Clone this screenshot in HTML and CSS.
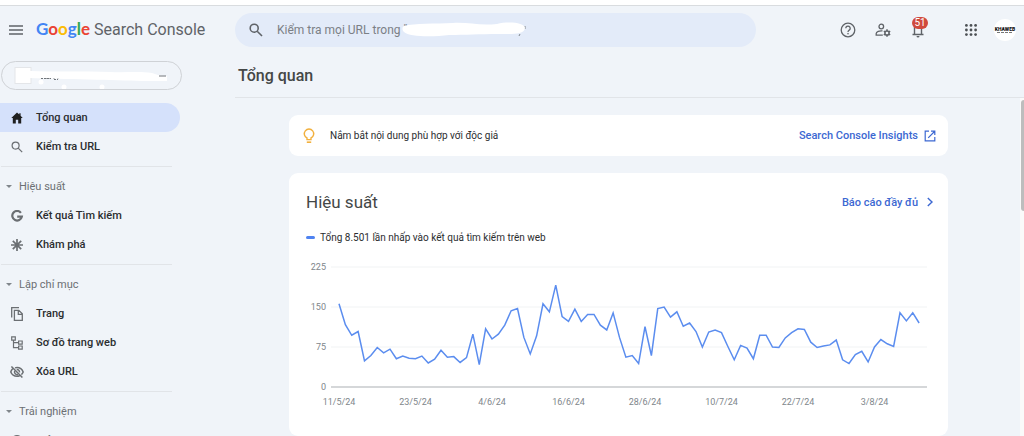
FILE: index.html
```html
<!DOCTYPE html>
<html lang="vi">
<head>
<meta charset="utf-8">
<title>Tổng quan - Google Search Console</title>
<link rel="stylesheet" href="styles.css">
</head>
<body>
<header class="topbar">
  <div class="brand">
    <button class="icon-button menu" aria-label="Menu">
      <svg width="14" height="10" viewBox="0 0 14 10" fill="none" stroke="#5f6368" stroke-width="1.3"><path d="M0 1h14M0 5h14M0 9h14"/></svg>
    </button>
    <a class="logo" href="#"><span class="google"><span class="b">G</span><span class="r">o</span><span class="y">o</span><span class="b">g</span><span class="g">l</span><span class="r">e</span></span><span class="product">Search Console</span></a>
  </div>
  <form class="search">
    <svg width="14" height="14" viewBox="0 0 14 14" fill="none" stroke="#5f6368" stroke-width="1.6"><circle cx="5.2" cy="5.2" r="4"/><path d="M8.2 8.2L13 13"/></svg>
    <div class="search-field">
      <input type="text" aria-label="Kiểm tra URL" placeholder="Kiểm tra mọi URL trong &quot;">
      <svg class="search-mask" width="128" height="16" viewBox="0 0 128 16"><path d="M124 4v3M119 12l-1 2" stroke="#80868b"/><path d="M3 4C14 1 34 2 52 1C67 0 78 4 96 2C108-1 124 1 124 6C123 13 111 12 98 12C78 12 64 13 48 13C32 15 8 15 3 10C1 8 1 5 3 4Z" fill="#fff"/></svg>
    </div>
  </form>
  <div class="actions">
    <button class="icon-button" aria-label="Trợ giúp">
      <svg width="16" height="16" viewBox="0 0 16 16" fill="none" stroke="#5f6368" stroke-width="1.3"><circle cx="8" cy="8" r="6.8"/><path d="M5.8 6.3a2.2 2.2 0 1 1 3.4 1.8C8.4 8.7 8 9 8 9.9"/><circle cx="8" cy="11.7" r=".5" fill="#5f6368" stroke-width=".6"/></svg>
    </button>
    <button class="icon-button" aria-label="Quản lý người dùng">
      <svg width="16" height="14" viewBox="0 0 16 14" fill="none" stroke="#5f6368" stroke-width="1.3"><circle cx="6.3" cy="3.5" r="2.3"/><path d="M7.5 7.9C4.5 7.5 1.2 8.7 1.2 10.5v1.6h6.6"/><circle cx="12" cy="10" r="2.1" stroke-width="1.5"/><path d="M12 6.3v1.6M12 12.1v1.6M8.8 8.150l1.4.8M13.8 11.050l1.4.8M8.8 11.850l1.4-.8M13.8 8.950l1.4-.8" stroke-width="1.5"/></svg>
    </button>
    <button class="icon-button bell" aria-label="Thông báo">
      <svg width="14" height="16" viewBox="0 0 14 16" fill="none" stroke="#5f6368" stroke-width="1.4"><path d="M1.500 12.500h11M3.500 12.500V6a3.500 3.500 0 0 1 7 0v6.500M7 2V.5"/><path d="M5.500 14h3a1.500 1.500 0 0 1-3 0z" fill="#5f6368" stroke="none"/></svg>
      <span class="badge">51</span>
    </button>
    <button class="icon-button apps" aria-label="Ứng dụng">
      <svg width="12" height="12" viewBox="0 0 12 12" fill="#4c5054"><circle cx="1.4" cy="1.4" r="1.4"/><circle cx="6" cy="1.4" r="1.4"/><circle cx="10.6" cy="1.4" r="1.4"/><circle cx="1.4" cy="6" r="1.4"/><circle cx="6" cy="6" r="1.4"/><circle cx="10.6" cy="6" r="1.4"/><circle cx="1.4" cy="10.6" r="1.4"/><circle cx="6" cy="10.6" r="1.4"/><circle cx="10.6" cy="10.6" r="1.4"/></svg>
    </button>
    <button class="avatar" aria-label="Tài khoản"><span>KHAWEB</span><svg width="16" height="1" viewBox="0 0 16 1"><path d="M0 .5h16" stroke="#777" stroke-dasharray="3 1"/></svg></button>
  </div>
</header>

<div class="layout">
  <aside class="sidebar">
    <button class="property" aria-label="Chọn trang web">
      <svg width="158" height="26" viewBox="0 0 158 26"><rect x="1" y="4.5" width="16" height="16" fill="#fff" stroke="#e4e6e9"/><path d="M27 15.5h18M120 16h4" stroke="#70757a" stroke-dasharray="2 2"/><path d="M16 8C40 9 70 8 96 9C112 10 124 8 138 10L144 12L153 13V18H128C100 17 50 16 16 15Z" fill="#fff"/><path d="M145 13h7" stroke="#70757a"/><path d="M27 15.500h10M40 16.500h4" stroke="#70757a" stroke-dasharray="2 1"/><circle cx="27" cy="19" r="2.5" fill="#fff"/><circle cx="50" cy="24" r="2.5" fill="#fff"/><circle cx="88" cy="24" r="2.5" fill="#fff"/></svg>
    </button>
    <nav>
      <div class="group">
        <a class="item active" href="#"><svg width="12" height="12" viewBox="0 0 12 12" fill="#1f1f1f"><path d="M6 .5L.3 5.9h1.500V11.500h3V7.8h2.400v3.7h3V5.9h1.500L9.600 3.7V1.300H8.300v1.200z"/></svg>Tổng quan</a>
        <a class="item" href="#"><svg width="12" height="12" viewBox="0 0 12 12" fill="none" stroke="#6b6f73" stroke-width="1.2"><circle cx="4.6" cy="4.6" r="3.5"/><path d="M7.2 7.2l4 4"/></svg>Kiểm tra URL</a>
      </div>
      <div class="group">
        <button class="heading">Hiệu suất</button>
        <a class="item" href="#"><svg width="12" height="12" viewBox="0 0 12 12" fill="none" stroke="#6b6f73" stroke-width="2.2"><path d="M9.9 2.8A4.8 4.8 0 1 0 10.8 6.7H6.2"/></svg>Kết quả Tìm kiếm</a>
        <a class="item" href="#"><svg width="12" height="12" viewBox="0 0 12 12" stroke="#6b6f73" stroke-width="1.7"><path d="M6 0v12M0 6h12M1.8 1.8l8.400 8.400M10.2 1.8l-8.400 8.400"/></svg>Khám phá</a>
      </div>
      <div class="group">
        <button class="heading">Lập chỉ mục</button>
        <a class="item" href="#"><svg width="12" height="14" viewBox="0 0 12 14" fill="none" stroke="#6b6f73" stroke-width="1.3"><path d="M.7 10.5V.7H8M3.4 3.3h4.400l3.500 3.500v6.500H3.400zM7.300 3.300v4h4"/></svg>Trang</a>
        <a class="item" href="#"><svg width="12" height="14" viewBox="0 0 12 14" fill="none" stroke="#6b6f73" stroke-width="1.2"><path d="M.7.8h3.600v3.400H.7zM7.600 5h3.600v3.200H7.600zM7.600 10h3.600v3.200H7.600zM2.500 4.200v7.400h5.100M2.500 6.600h5.100"/></svg>Sơ đồ trang web</a>
        <a class="item" href="#"><svg width="14" height="12" viewBox="0 0 14 12" fill="none" stroke="#6b6f73" stroke-width="1.5"><path d="M2.600 2.900C1.600 3.800 1 4.900.8 6c1 2.600 3.300 4.300 6.200 4.300 1 0 1.900-.2 2.700-.5M5 1.900C5.600 1.700 6.300 1.600 7 1.600c2.900 0 5.200 1.800 6.200 4.400-.4 1-1 1.900-1.800 2.600M1.400.5l11 11"/><path d="M4.700 4.900A2.700 2.700 0 0 0 8 8.500M6.700 3.500A2.500 2.500 0 0 1 9.500 6.300"/></svg>Xóa URL</a>
      </div>
      <div class="group">
        <button class="heading">Trải nghiệm</button>
        <a class="item" href="#"><svg width="12" height="12" viewBox="0 0 12 12"><circle cx="6" cy="6" r="6" fill="#6b6f73"/><path d="M3 6h6M6 3v6" stroke="#f0f4f9" stroke-width="1.4"/></svg>Trải nghiệm trang</a>
      </div>
    </nav>
  </aside>

  <main class="content">
    <h1>Tổng quan</h1>
    <div class="scroll">
      <div class="cards">
        <section class="card insight">
          <svg width="12" height="16" viewBox="0 0 12 16" fill="none" stroke="#f2b03d" stroke-width="1.4"><path d="M4 11.6V10A4.7 4.7 0 1 1 8 10v1.6z"/><path d="M3.8 14.2h4.400" stroke-width="1.6"/></svg>
          <p>Nắm bắt nội dung phù hợp với độc giả</p>
          <a class="link" href="#">Search Console Insights<svg width="12" height="12" viewBox="0 0 12 12" fill="none" stroke="#3c68d2" stroke-width="1.2"><path d="M5 1.2H1.2v9.600h9.600V7M7 1.200h3.800V5M10.500 1.500L4.200 7.800"/></svg></a>
        </section>
        <section class="card performance">
          <div class="card-head">
            <h2>Hiệu suất</h2>
            <a class="link" href="#">Báo cáo đầy đủ<svg width="12" height="12" viewBox="0 0 12 12" fill="none" stroke="#3c68d2" stroke-width="1.4"><path d="M3.8 2L8 6l-4.200 4"/></svg></a>
          </div>
          <p class="legend">Tổng 8.501 lần nhấp vào kết quả tìm kiếm trên web</p>
          <svg class="chart" viewBox="0 0 624 150" role="img" aria-label="Lượt nhấp theo ngày"></svg>
        </section>
      </div>
      <div class="scrollbar"><div class="thumb"></div></div>
    </div>
  </main>
</div>
<script src="chart.js"></script>
</body>
</html>
```
FILE: styles.css
```css
* { box-sizing: border-box; }
body {
  margin: 0;
  height: 100vh;
  overflow: hidden;
  display: flex;
  flex-direction: column;
  background: #f0f4f9;
  border-top: 5px solid #fff;
  font-family: Roboto, "Noto Sans", sans-serif;
  font-size: 11px;
  color: #2b2d2f;
}
button, input { font: inherit; color: inherit; border: 0; background: none; padding: 0; margin: 0; }
a { color: inherit; text-decoration: none; }
h1, h2, p { margin: 0; font-weight: 400; }
svg { display: block; flex: none; }

.topbar {
  flex: none;
  display: flex;
  align-items: center;
  height: 48px;
  border-top: 1px solid #d9dcdf;
}
.brand { flex: none; width: 235px; display: flex; align-items: center; gap: 13px; padding-left: 9px; }
.icon-button { position: relative; display: flex; align-items: center; justify-content: center; width: 16px; height: 18px; }
.menu { width: 14px; }
.logo { display: flex; align-items: baseline; gap: 4px; font-size: 16px; line-height: 20px; color: #5f6368; }
.google { font-family: Lato, sans-serif; font-size: 17px; font-weight: 700; }
.google .b { color: #4285f4; }
.google .r { color: #ea4335; }
.google .y { color: #fbbc05; }
.google .g { color: #34a853; }
.search {
  flex: 0 1 521px;
  height: 34px;
  display: flex;
  align-items: center;
  gap: 14px;
  padding-left: 14px;
  border-radius: 17px;
  background: #e3ebf9;
}
.search-field { position: relative; flex: 1; display: flex; align-items: center; }
.search input { width: 100%; font-size: 12px; color: #3c4043; outline: none; }
.search input::placeholder { color: #7b8086; opacity: 1; }
.search-mask { position: absolute; left: 124px; }
.actions { flex: none; display: flex; align-items: center; gap: 19px; margin-left: auto; padding-right: 8px; }
.badge {
  position: absolute;
  top: -4px;
  left: 2px;
  width: 16px;
  height: 12px;
  border-radius: 6px;
  background: #d04a3e;
  color: #fff;
  font-size: 10px;
  line-height: 12px;
  text-align: center;
}
.apps { margin-left: 18px; }
.avatar {
  width: 22px;
  height: 22px;
  border-radius: 50%;
  background: #fff;
  display: flex;
  flex-direction: column;
  align-items: center;
  justify-content: center;
  font-size: 5px;
  line-height: 6px;
  font-weight: 900;
  color: #111;
  margin-left: -4px;
}

.layout { flex: 1; min-height: 0; display: flex; }
.sidebar { flex: none; width: 235px; padding: 8px 0 0 1px; overflow: hidden; }
.property {
  display: flex;
  align-items: center;
  width: 181px;
  height: 29px;
  padding-left: 12px;
  border: 1px solid #cfd2d6;
  border-radius: 15px;
  margin-bottom: 13px;
}
.group { width: 171px; }
.group + .group { margin-top: 5px; padding-top: 5px; border-top: 1px solid #e1e4e8; }
.item { display: flex; align-items: center; height: 29px; padding-left: 9px; font-weight: 500; white-space: nowrap; }
.item svg { width: 14px; margin-right: 12px; }
.active { width: 180px; margin-left: -1px; padding-left: 10px; border-radius: 0 15px 15px 0; background: #d5e1fb; }
.heading { display: flex; align-items: center; height: 29px; padding-left: 5px; color: #6b6f73; }
.heading::before {
  content: "";
  border: 3px solid transparent;
  border-top-color: #80868b;
  border-bottom: 0;
  margin-right: 7px;
}

.content { flex: 1; min-width: 0; display: flex; flex-direction: column; }
.content h1 {
  flex: none;
  height: 45px;
  padding-left: 3px;
  border-bottom: 1px solid #e1e4e8;
  font-size: 16px;
  line-height: 45px;
  font-weight: 500;
  color: #444746;
}
.scroll { flex: 1; min-height: 0; display: flex; overflow: hidden; }
.cards { flex: 1; min-width: 0; padding: 17px 72px 0 54px; display: flex; flex-direction: column; gap: 17px; }
.card { flex: none; background: #fff; border-radius: 9px; }
.insight { display: flex; align-items: center; height: 41px; padding: 0 12px 0 14px; gap: 15px; }
.insight p, .legend { font-size: 10px; }
.link { display: flex; align-items: center; gap: 6px; margin-left: auto; font-weight: 500; color: #3c68d2; }
.performance { padding: 16px 12px 27px 17px; }
.card-head { display: flex; align-items: center; height: 26px; }
.card-head h2 { font-size: 17px; line-height: 26px; color: #444746; }
.legend { display: flex; align-items: center; gap: 5px; height: 16px; margin: 14px 0; }
.legend::before { content: ""; width: 9px; height: 3px; border-radius: 2px; background: #4f83f1; }
.chart { width: 624px; max-width: 100%; height: auto; }
.chart text { font-size: 9px; fill: #80868b; }
.scrollbar { flex: none; width: 4px; background: #fafafa; padding: 2px 0 0 1px; }
.thumb { height: 111px; background: #bdbdbd; border-radius: 3px 0 0 3px; }
```
FILE: chart.js
```js
const clicks = [156,117,97,104,49,59,74,64,71,53,58,54,53,58,45,52,69,56,57,46,55,99,42,109,90,99,116,143,147,93,62,96,156,141,191,132,123,146,123,136,136,116,107,139,93,56,59,44,113,59,147,150,131,141,114,120,104,75,103,107,102,76,51,78,73,53,97,97,75,74,92,102,109,108,84,74,77,79,88,51,44,61,67,47,75,89,81,76,139,124,139,120];
const dates = ["11/5/24", "23/5/24", "4/6/24", "16/6/24", "28/6/24", "10/7/24", "22/7/24", "3/8/24"];
const chart = document.querySelector(".chart");
const left = 25, start = 33, step = 6.375, base = 128;
const y = v => base - v * 120 / 225;

function add(name, attributes, text) {
  const node = document.createElementNS("http://www.w3.org/2000/svg", name);
  for (const key in attributes) node.setAttribute(key, attributes[key]);
  if (text !== undefined) node.textContent = text;
  chart.appendChild(node);
}

[225, 150, 75, 0].forEach(v => {
  add("line", { x1: left, x2: 621, y1: y(v), y2: y(v), stroke: v ? "#f1f3f4" : "#d5d7d9", "stroke-width": v ? 1 : 2 });
  add("text", { x: 20, y: y(v) + 3, "text-anchor": "end" }, v);
});
dates.forEach((d, i) => add("text", { x: start + i * 12 * step, y: 146, "text-anchor": "middle" }, d));
add("polyline", {
  points: clicks.map((v, i) => (start + i * step) + "," + y(v)).join(" "),
  fill: "none", stroke: "#5b8def", "stroke-width": 1.5
});
```
